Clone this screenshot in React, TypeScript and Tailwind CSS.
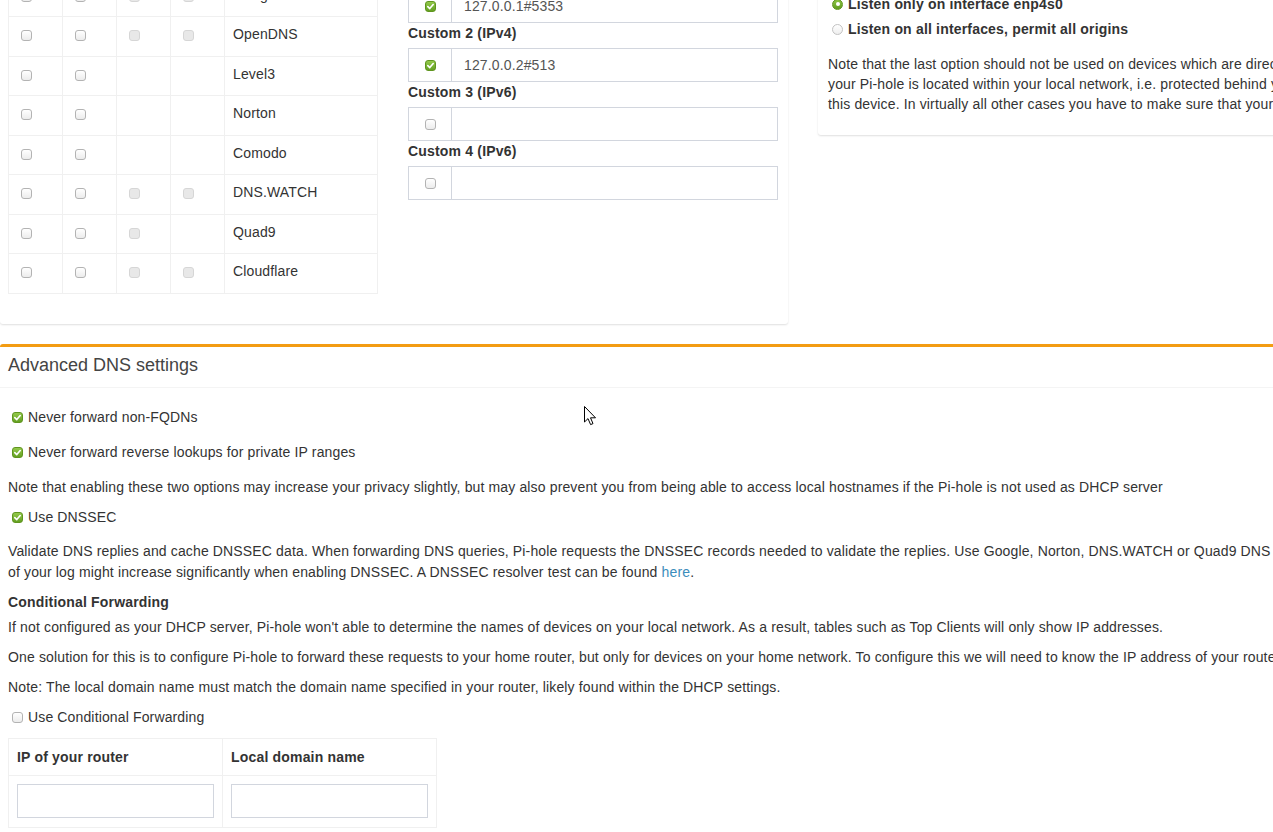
import React from "react"

type BoxState = "on" | "off" | "dis"

function Check({ state }: { state: BoxState }) {
  if (state === "on") {
    return (
      <span className="inline-flex items-center justify-center w-[11px] h-[11px] rounded-[3px] border border-[#5f951f] bg-linear-to-b from-[#93c94a] to-[#64a021] shrink-0">
        <svg width="9" height="9" viewBox="0 0 10 10">
          <path d="M2 5.2 L4.2 7.3 L8 2.8" fill="none" stroke="#fff" strokeWidth="1.8" strokeLinecap="round" strokeLinejoin="round" />
        </svg>
      </span>
    )
  }
  if (state === "dis") {
    return <span className="inline-block w-[11px] h-[11px] rounded-[3px] border border-[#d6d6d6] bg-[#e8e8e8] shrink-0" />
  }
  return <span className="inline-block w-[11px] h-[11px] rounded-[3px] border border-[#b3b3b3] bg-linear-to-b from-white to-[#ececec] shrink-0" />
}

function Radio({ on }: { on?: boolean }) {
  if (on) {
    return (
      <span className="inline-flex items-center justify-center w-[11px] h-[11px] rounded-full bg-linear-to-b from-[#8cc443] to-[#5f9b1d] border border-[#5f951f] shrink-0">
        <span className="w-[4px] h-[4px] rounded-full bg-white" />
      </span>
    )
  }
  return <span className="inline-block w-[11px] h-[11px] rounded-full border border-[#c2c2c2] bg-linear-to-b from-white to-[#eeeeee] shrink-0" />
}

const servers: { name: string; v6: number }[] = [
  { name: "Google", v6: 2 },
  { name: "OpenDNS", v6: 2 },
  { name: "Level3", v6: 0 },
  { name: "Norton", v6: 0 },
  { name: "Comodo", v6: 0 },
  { name: "DNS.WATCH", v6: 2 },
  { name: "Quad9", v6: 1 },
  { name: "Cloudflare", v6: 2 },
]

const customs = [
  { label: "Custom 1 (IPv4)", on: true, value: "127.0.0.1#5353" },
  { label: "Custom 2 (IPv4)", on: true, value: "127.0.0.2#513" },
  { label: "Custom 3 (IPv6)", on: false, value: "" },
  { label: "Custom 4 (IPv6)", on: false, value: "" },
]

function ServerTable() {
  return (
    <div className="w-[370px] border-l border-t border-[#f0f0f0] shrink-0">
      <div className="grid grid-cols-[54px_54px_54px_54px_153px] h-[39.5px] font-bold tracking-[0.18px]">
        <div className="col-span-2 border-r border-b border-[#f0f0f0] px-[9px] pt-[8px]">IPv4</div>
        <div className="col-span-2 border-r border-b border-[#f0f0f0] px-[9px] pt-[8px]">IPv6</div>
        <div className="border-r border-b border-[#f0f0f0] px-[9px] pt-[8px]">Name</div>
      </div>
      {servers.map((s) => (
        <div key={s.name} className="grid grid-cols-[54px_54px_54px_54px_153px] h-[39.5px]">
          <div className="flex items-start border-r border-b border-[#f0f0f0] pl-[12px] pt-[13px]"><Check state="off" /></div>
          <div className="flex items-start border-r border-b border-[#f0f0f0] pl-[12px] pt-[13px]"><Check state="off" /></div>
          <div className="flex items-start border-r border-b border-[#f0f0f0] pl-[12px] pt-[13px]">{s.v6 >= 1 && <Check state="dis" />}</div>
          <div className="flex items-start border-r border-b border-[#f0f0f0] pl-[12px] pt-[13px]">{s.v6 >= 2 && <Check state="dis" />}</div>
          <div className="border-r border-b border-[#f0f0f0] pl-[8px] pt-[7px]">{s.name}</div>
        </div>
      ))}
    </div>
  )
}

function CustomServers() {
  return (
    <div className="w-[370px] ml-[30px] pt-[27px] shrink-0">
      {customs.map((c) => (
        <div key={c.label}>
          <div className="h-[20px] leading-[20px] font-bold tracking-[0.18px] mb-[5px]">{c.label}</div>
          <div className="flex h-[34px] border border-[#d2d6de]">
            <div className="w-[43px] border-r border-[#d2d6de] flex items-center justify-center">
              <Check state={c.on ? "on" : "off"} />
            </div>
            <div className="flex-1 flex items-center px-[12px] text-[#555]">{c.value}</div>
          </div>
        </div>
      ))}
    </div>
  )
}

function CheckRow({ on, children, className }: { on?: boolean; children: React.ReactNode; className?: string }) {
  return (
    <div className={"flex items-center gap-[5px] h-[20px] pl-[4px] " + (className ?? "")}>
      <Check state={on ? "on" : "off"} />
      <span>{children}</span>
    </div>
  )
}

function Cursor() {
  return (
    <svg className="absolute left-[584px] top-[406px]" width="13" height="20" viewBox="0 0 13 20">
      <path d="M0.5 0.5 L0.5 16 L4 12.6 L6.6 18.6 L9 17.6 L6.5 11.8 L11.5 11.8 Z" fill="#fff" stroke="#000" strokeWidth="1" strokeLinejoin="round" />
    </svg>
  )
}

export default function App() {
  return (
    <div
      className="relative w-[1273px] h-[832px] overflow-hidden bg-white text-[14px] leading-[20px] tracking-[0.14px] text-[#333]"
      style={{ fontFamily: '"Liberation Sans", Arial, sans-serif' }}
    >
      <div className="flex items-start -mt-[70px]">
        <div className="w-[788px] shrink-0 bg-white rounded-[3px] shadow-[0_1px_2px_rgba(0,0,0,0.13)] pt-[7px] pb-[30.5px] pl-[8px] flex items-start">
          <ServerTable />
          <CustomServers />
        </div>
        <div className="w-[820px] ml-[30px] shrink-0 bg-white rounded-[3px] shadow-[0_1px_2px_rgba(0,0,0,0.13)] pt-[39px] pb-[21px] pl-[10px]">
          <div className="font-bold tracking-[0.18px]">
            <div className="flex items-center gap-[5px] h-[20px] pl-[4px]"><Radio /><span>Listen on all interfaces</span></div>
            <div className="flex items-center gap-[5px] h-[20px] pl-[4px] mt-[5px]"><Radio on /><span>Listen only on interface enp4s0</span></div>
            <div className="flex items-center gap-[5px] h-[20px] pl-[4px] mt-[5px]"><Radio /><span>Listen on all interfaces, permit all origins</span></div>
          </div>
          <p className="mt-[15px] whitespace-nowrap">
            Note that the last option should not be used on devices which are directly connected to the Internet. This option is safe if<br />
            your Pi-hole is located within your local network, i.e. protected behind your router, and you have not forwarded port 53 to<br />
            this device. In virtually all other cases you have to make sure that your Pi-hole is properly firewalled.
          </p>
        </div>
      </div>

      <div className="mt-[20px] w-[1400px] bg-white border-t-[3px] border-[#f39c12] rounded-[3px] shadow-[0_1px_2px_rgba(0,0,0,0.1)]">
        <div className="h-[41px] px-[8px] pt-[8px] text-[18px] leading-[20px] tracking-normal text-[#444] border-b border-[#f4f4f4]">
          Advanced DNS settings
        </div>
        <div className="px-[8px] pt-[19px] pb-[20px]">
          <CheckRow on>Never forward non-FQDNs</CheckRow>
          <CheckRow on className="mt-[15px]">Never forward reverse lookups for private IP ranges</CheckRow>
          <p className="mt-[15px] whitespace-nowrap">
            Note that enabling these two options may increase your privacy slightly, but may also prevent you from being able to access local hostnames if the Pi-hole is not used as DHCP server
          </p>
          <CheckRow on className="mt-[10px]">Use DNSSEC</CheckRow>
          <p className="mt-[14px] leading-[20.5px] whitespace-nowrap">
            Validate DNS replies and cache DNSSEC data. When forwarding DNS queries, Pi-hole requests the DNSSEC records needed to validate the replies. Use Google, Norton, DNS.WATCH or Quad9 DNS servers when activating DNSSEC. Note that the size<br />
            of your log might increase significantly when enabling DNSSEC. A DNSSEC resolver test can be found <a className="text-[#3c8dbc]" href="#">here</a>.
          </p>
          <div className="mt-[10px] font-bold tracking-[0.18px]">Conditional Forwarding</div>
          <p className="mt-[5px] whitespace-nowrap">
            If not configured as your DHCP server, Pi-hole won't able to determine the names of devices on your local network. As a result, tables such as Top Clients will only show IP addresses.
          </p>
          <p className="mt-[10px] whitespace-nowrap">
            One solution for this is to configure Pi-hole to forward these requests to your home router, but only for devices on your home network. To configure this we will need to know the IP address of your router and the name of your local network.
          </p>
          <p className="mt-[10px] whitespace-nowrap">
            Note: The local domain name must match the domain name specified in your router, likely found within the DHCP settings.
          </p>
          <CheckRow className="mt-[10px]">Use Conditional Forwarding</CheckRow>
          <div className="mt-[11px] w-[429px] border border-[#f0f0f0]">
            <div className="grid grid-cols-[214px_213px] h-[37px] font-bold tracking-[0.18px] border-b border-[#f0f0f0]">
              <div className="px-[8px] flex items-center border-r border-[#f0f0f0]">IP of your router</div>
              <div className="px-[8px] flex items-center">Local domain name</div>
            </div>
            <div className="grid grid-cols-[214px_213px] h-[51px]">
              <div className="pl-[8px] pr-[8px] pt-[8px] border-r border-[#f0f0f0]">
                <input className="w-[197px] h-[34px] border border-[#d2d6de] outline-none" />
              </div>
              <div className="pl-[8px] pr-[8px] pt-[8px]">
                <input className="w-[197px] h-[34px] border border-[#d2d6de] outline-none" />
              </div>
            </div>
          </div>
        </div>
      </div>
      <Cursor />
    </div>
  )
}
